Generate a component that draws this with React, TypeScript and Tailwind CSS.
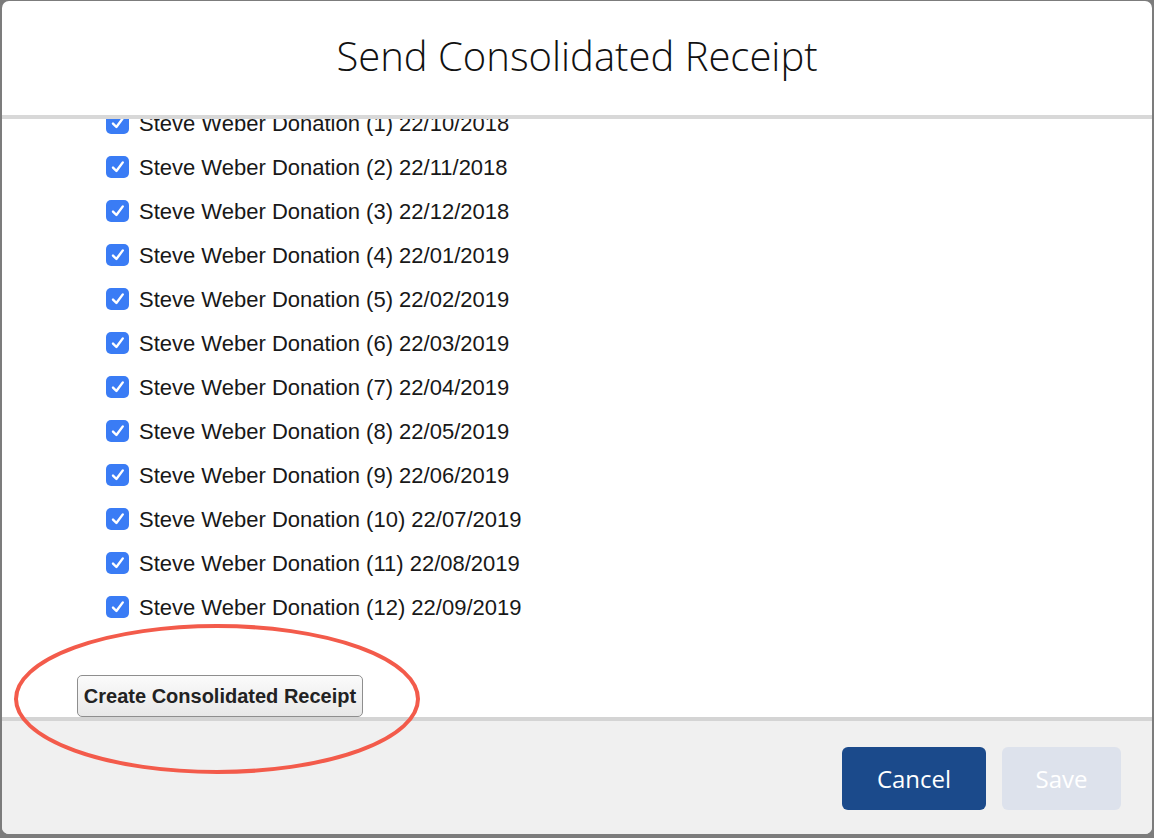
import React from "react"

/* ---------------- DATA ---------------- */

const DONATIONS = [
  { n: 1, date: "22/10/2018" },
  { n: 2, date: "22/11/2018" },
  { n: 3, date: "22/12/2018" },
  { n: 4, date: "22/01/2019" },
  { n: 5, date: "22/02/2019" },
  { n: 6, date: "22/03/2019" },
  { n: 7, date: "22/04/2019" },
  { n: 8, date: "22/05/2019" },
  { n: 9, date: "22/06/2019" },
  { n: 10, date: "22/07/2019" },
  { n: 11, date: "22/08/2019" },
  { n: 12, date: "22/09/2019" }
]

/* ---------------- PARTS ---------------- */

function CheckBox() {
  return (
    <span className="flex h-[22px] w-[23px] shrink-0 items-center justify-center rounded-[5px] bg-[#3a7cf5]">
      <svg width="16" height="16" viewBox="0 0 16 16" fill="none">
        <path
          d="M3 8.6 L6.4 12 L12.8 3.4"
          stroke="white"
          strokeWidth="2.4"
          strokeLinecap="round"
          strokeLinejoin="round"
        />
      </svg>
    </span>
  )
}

function DonationRow({ n, date }: { n: number; date: string }) {
  return (
    <label className="flex h-[44px] items-center gap-[10px]">
      <CheckBox />
      <span className="text-[22px] text-[#181818]">
        Steve Weber Donation ({n}) {date}
      </span>
    </label>
  )
}

/* ---------------- PAGE ---------------- */

export default function App() {
  return (
    <div className="h-[838px] w-[1154px] bg-[#7c7c7c] pl-[2px] pt-[1px] font-['Liberation_Sans',Arial,sans-serif]">

      <div className="relative flex h-[833px] w-[1150px] flex-col overflow-hidden rounded-[7px] bg-white">

        {/* HEADER */}

        <div className="flex h-[118px] shrink-0 items-center justify-center border-b-4 border-[#d8d8d8] pb-[4px]">
          <h1 className="font-['Open_Sans',sans-serif] text-[40px] font-light text-[#111]">
            Send Consolidated Receipt
          </h1>
        </div>

        {/* BODY (scrolled) */}

        <div className="h-[602px] shrink-0 overflow-hidden border-b-4 border-[#d4d4d4]">
          <div className="-mt-[18px] pl-[104px]">
            {DONATIONS.map(d => (
              <DonationRow key={d.n} n={d.n} date={d.date} />
            ))}
          </div>

          <div className="pl-[75px] pt-[46px]">
            <button className="h-[42px] w-[286px] rounded-[5px] border border-[#8e8e8e] bg-gradient-to-b from-[#fbfbfb] to-[#e8e8e8] text-[20px] font-bold text-[#222]">
              Create Consolidated Receipt
            </button>
          </div>
        </div>

        {/* FOOTER */}

        <div className="flex flex-1 items-start justify-end gap-[16px] bg-[#f0f0f0] pr-[31px] pt-[26px]">
          <button className="h-[63px] w-[144px] rounded-[6px] bg-[#1b4a8b] font-['Open_Sans',sans-serif] text-[24px] text-white">
            Cancel
          </button>
          <button className="h-[63px] w-[119px] rounded-[6px] bg-[#dde2ec] font-['Open_Sans',sans-serif] text-[24px] text-white">
            Save
          </button>
        </div>

        {/* ANNOTATION */}

        <svg
          className="pointer-events-none absolute left-0 top-0"
          width="1150"
          height="833"
        >
          <ellipse
            cx="215"
            cy="698"
            rx="201"
            ry="73"
            fill="none"
            stroke="#f35b4b"
            strokeWidth="4"
          />
        </svg>

      </div>

    </div>
  )
}
